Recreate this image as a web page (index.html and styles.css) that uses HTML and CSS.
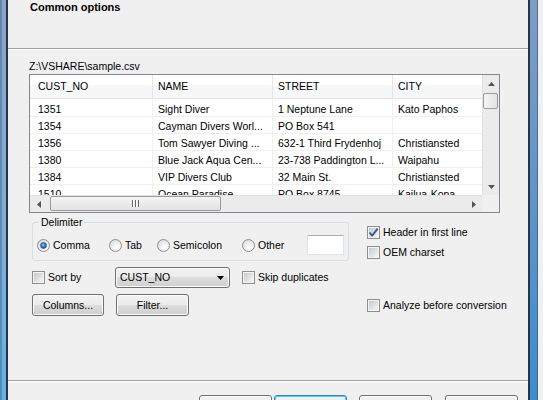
FILE: index.html
```html
<!DOCTYPE html>
<html>
<head>
<meta charset="utf-8">
<link rel="stylesheet" href="styles.css">
</head>
<body>
<div class="screen">
  <div class="frame frame-left"></div>
  <div class="dialog">
    <div class="header"><div class="title">Common options</div></div>
    <div class="sep"></div>
    <div class="body">
      <div class="path">Z:\VSHARE\sample.csv</div>
      <div class="listview">
        <div class="lv-main">
          <div class="lv-head">
            <div class="c c1">CUST_NO</div>
            <div class="c c2">NAME</div>
            <div class="c c3">STREET</div>
            <div class="c c4">CITY</div>
          </div>
          <div class="lv-rows">
            <div class="lv-row"><div class="c c1">1351</div><div class="c c2">Sight Diver</div><div class="c c3">1 Neptune Lane</div><div class="c c4">Kato Paphos</div></div>
            <div class="lv-row"><div class="c c1">1354</div><div class="c c2">Cayman Divers Worl...</div><div class="c c3">PO Box 541</div><div class="c c4"></div></div>
            <div class="lv-row"><div class="c c1">1356</div><div class="c c2">Tom Sawyer Diving ...</div><div class="c c3">632-1 Third Frydenhoj</div><div class="c c4">Christiansted</div></div>
            <div class="lv-row"><div class="c c1">1380</div><div class="c c2">Blue Jack Aqua Cen...</div><div class="c c3">23-738 Paddington L...</div><div class="c c4">Waipahu</div></div>
            <div class="lv-row"><div class="c c1">1384</div><div class="c c2">VIP Divers Club</div><div class="c c3">32 Main St.</div><div class="c c4">Christiansted</div></div>
            <div class="lv-row"><div class="c c1">1510</div><div class="c c2">Ocean Paradise</div><div class="c c3">PO Box 8745</div><div class="c c4">Kailua-Kona</div></div>
          </div>
        </div>
        <div class="vscroll">
          <div class="sbtn"><svg width="7" height="4" viewBox="0 0 7 4"><polygon points="3.5,0 7,4 0,4" fill="#555"/></svg></div>
          <div class="vthumb"></div>
          <div class="sfill"></div>
          <div class="sbtn"><svg width="7" height="4" viewBox="0 0 7 4"><polygon points="0,0 7,0 3.5,4" fill="#555"/></svg></div>
        </div>
        <div class="hscroll">
          <div class="sbtn"><svg width="4" height="7" viewBox="0 0 4 7"><polygon points="0,3.5 4,0 4,7" fill="#555"/></svg></div>
          <div class="hthumb"><svg width="7" height="7" viewBox="0 0 7 7"><rect x="0" y="0" width="1" height="7" fill="#666"/><rect x="1" y="0" width="1" height="7" fill="#fff"/><rect x="3" y="0" width="1" height="7" fill="#666"/><rect x="4" y="0" width="1" height="7" fill="#fff"/><rect x="6" y="0" width="1" height="7" fill="#666"/></svg></div>
          <div class="sfill"></div>
          <div class="sbtn"><svg width="4" height="7" viewBox="0 0 4 7"><polygon points="0,0 4,3.5 0,7" fill="#555"/></svg></div>
        </div>
        <div class="corner"></div>
      </div>
      <div class="options">
        <div class="opt-left">
          <fieldset class="group">
            <legend>Delimiter</legend>
            <div class="radios">
              <div class="radio w-comma"><span class="rb checked"><span class="dot"></span></span><span>Comma</span></div>
              <div class="radio w-tab"><span class="rb"></span><span>Tab</span></div>
              <div class="radio w-semi"><span class="rb"></span><span>Semicolon</span></div>
              <div class="radio w-other"><span class="rb"></span><span>Other</span></div>
              <div class="edit"></div>
            </div>
          </fieldset>
        </div>
        <div class="opt-right stack">
          <div class="check"><span class="cb"><svg width="11" height="11" viewBox="0 0 11 11"><path d="M1.5 5.5 L4.2 8.6 L9.6 1.6" fill="none" stroke="#3d5a8f" stroke-width="1.9" stroke-linejoin="round"/></svg></span><span>Header in first line</span></div>
          <div class="check"><span class="cb"></span><span>OEM charset</span></div>
        </div>
        <div class="opt-left sortrow">
          <div class="check w-sort"><span class="cb"></span><span>Sort by</span></div>
          <div class="combo"><span>CUST_NO</span><svg width="7" height="4" viewBox="0 0 7 4"><polygon points="0,0 7,0 3.5,4" fill="#000"/></svg></div>
          <div class="check skip"><span class="cb"></span><span>Skip duplicates</span></div>
        </div>
        <div class="opt-right"></div>
        <div class="opt-left btnrow">
          <div class="btn w-columns">Columns...</div>
          <div class="btn w-filter">Filter...</div>
        </div>
        <div class="opt-right analyze">
          <div class="check"><span class="cb"></span><span>Analyze before conversion</span></div>
        </div>
      </div>
    </div>
    <div class="sep"></div>
    <div class="footer">
      <div class="btn fbtn">&lt; Back</div>
      <div class="btn fbtn focus">Next &gt;</div>
      <div class="btn fbtn gap">Cancel</div>
      <div class="btn fbtn gap2">Help</div>
    </div>
  </div>
  <div class="frame frame-right"></div>
  <div class="outside"></div>
</div>
</body>
</html>
```
FILE: styles.css
```css
html, body {
  margin: 0;
  padding: 0;
}
body {
  font-family: "Liberation Sans", Arial, sans-serif;
  font-size: 10.5px;
  line-height: 13px;
  color: #000;
  background: #f0f0f0;
}
.screen {
  width: 543px;
  height: 400px;
  display: flex;
  overflow: hidden;
}
.frame {
  height: 400px;
  flex: none;
}
.frame-left {
  width: 8px;
  background:
    linear-gradient(to right, rgba(40, 70, 110, 0.35) 0 2px, transparent 2px 6px, #25364c 6px 8px),
    linear-gradient(to bottom, #8aa5c8 0%, #7fb0d8 60%, #66b2e3 100%);
}
.frame-right {
  width: 10px;
  background:
    linear-gradient(to right, #25364c 0 2px, transparent 2px 9px, rgba(40, 70, 110, 0.55) 9px 10px),
    linear-gradient(to bottom, #7f9dc2 0%, #5f93c6 55%, #3f8ccc 100%);
}
.outside {
  width: 5px;
  flex: none;
  background: #eef0f2;
}
.dialog {
  width: 520px;
  height: 400px;
  flex: none;
  display: flex;
  flex-direction: column;
  background: #f0f0f0;
}
.header {
  height: 48px;
  flex: none;
  padding: 1px 0 0 22px;
  box-sizing: border-box;
}
.title {
  font-size: 11px;
  font-weight: bold;
}
.sep {
  height: 2px;
  flex: none;
  box-sizing: border-box;
  border-top: 1px solid #a0a0a0;
  border-bottom: 1px solid #ffffff;
}
.body {
  height: 330px;
  flex: none;
  box-sizing: border-box;
  padding: 10px 0 0 21px;
}
.path {
  height: 13px;
}
.listview {
  margin-top: 1px;
  width: 471px;
  height: 139px;
  box-sizing: border-box;
  border: 1px solid #828790;
  background: #fff;
  display: grid;
  grid-template-columns: 452px 17px;
  grid-template-rows: 120px 17px;
}
.lv-main {
  overflow: hidden;
}
.lv-head {
  display: flex;
  height: 24px;
  box-sizing: border-box;
  border-bottom: 1px solid #e3e4e6;
  background: linear-gradient(#ffffff 0 42%, #f6f7f8 42% 100%);
  margin-bottom: 1px;
}
.lv-head .c {
  line-height: 23px;
  border-right: 1px solid #e3e4e6;
}
.lv-row {
  display: flex;
  height: 17px;
  box-sizing: border-box;
  border-bottom: 1px solid #f0f0f0;
}
.lv-row .c {
  line-height: 16px;
  padding-top: 1px;
  border-right: 1px solid #f0f0f0;
}
.c {
  flex: none;
  box-sizing: border-box;
  white-space: nowrap;
  overflow: hidden;
  padding-left: 5px;
}
.c1 { width: 123px; padding-left: 8px; }
.c2 { width: 120px; }
.c3 { width: 120px; }
.c4 { width: 89px; border-right: none !important; }

.vscroll {
  display: flex;
  flex-direction: column;
  background: #ebebeb;
  border-left: 1px solid #e2e2e2;
  box-sizing: border-box;
}
.hscroll {
  display: flex;
  background: #ebebeb;
  border-top: 1px solid #e2e2e2;
  box-sizing: border-box;
}
.sbtn {
  width: 16px;
  height: 16px;
  flex: none;
  display: flex;
  align-items: center;
  justify-content: center;
}
.vscroll .sbtn { width: 16px; height: 17px; }
.hscroll .sbtn { width: 17px; height: 16px; }
.sfill { flex: 1; }
.vthumb {
  flex: none;
  height: 16px;
  margin: 1px 1px 0 0;
  border: 1px solid #9b9b9b;
  border-radius: 2px;
  box-sizing: border-box;
  background: linear-gradient(to right, #f4f4f4, #e3e3e3);
}
.hthumb {
  flex: none;
  width: 171px;
  height: 15px;
  margin: 0 0 0 3px;
  border: 1px solid #9b9b9b;
  border-radius: 2px;
  box-sizing: border-box;
  background: linear-gradient(#f5f5f5, #e2e2e2);
  display: flex;
  align-items: center;
  justify-content: center;
}
.corner {
  background: #f0f0f0;
}

.options {
  display: grid;
  grid-template-columns: 338px 1fr;
  grid-template-rows: 54px 27px 22px;
}
.opt-left {
  padding-left: 3px;
}
.group {
  margin: 3px 0 0 0;
  padding: 6px 0 5px 0;
  width: 317px;
  box-sizing: border-box;
  border: 1px solid #d5dfe5;
  border-radius: 3px;
  min-width: 0;
}
.group legend {
  padding: 0 2px;
  margin-left: 6px;
  line-height: 13px;
}
.radios {
  display: flex;
  align-items: center;
  height: 20px;
  margin-left: 4px;
}
.radio {
  display: flex;
  align-items: center;
  gap: 3px;
  flex: none;
}
.w-comma { width: 72px; }
.w-tab { width: 48px; }
.w-semi { width: 85px; }
.w-other { width: 65px; }
.rb {
  width: 13px;
  height: 13px;
  flex: none;
  box-sizing: border-box;
  border-radius: 50%;
  border: 1px solid #8f8f8f;
  background: radial-gradient(circle at 60% 65%, #ffffff 0%, #f2f2f2 35%, #cfd2d6 100%);
  display: flex;
  align-items: center;
  justify-content: center;
}
.rb .dot {
  width: 7px;
  height: 7px;
  border-radius: 50%;
  box-sizing: border-box;
  border: 1px solid #2b5d93;
  background: radial-gradient(circle at 45% 40%, #9fd4f6 0%, #2a7cc4 45%, #0f3f7c 100%);
}
.edit {
  width: 37px;
  height: 20px;
  box-sizing: border-box;
  background: #fff;
  border: 1px solid #dfe3ea;
  border-top-color: #abadb3;
  margin-left: 0;
}
.stack {
  padding-top: 13px;
  display: flex;
  flex-direction: column;
  gap: 7px;
}
.check {
  display: flex;
  align-items: center;
  height: 13px;
  flex: none;
}
.cb {
  width: 13px;
  height: 13px;
  flex: none;
  box-sizing: border-box;
  border: 1px solid #8e8f8f;
  padding: 1px;
  margin-right: 3px;
  background: linear-gradient(135deg, #c4c8ce, #f6f6f6) content-box, #f4f4f4;
  display: flex;
  align-items: center;
  justify-content: center;
  overflow: visible;
}
.cb svg { flex: none; }
.sortrow {
  display: flex;
  align-items: flex-start;
}
.sortrow .check {
  margin-top: 4px;
}
.w-sort { width: 83px; }
.combo {
  width: 115px;
  height: 21px;
  box-sizing: border-box;
  border: 1px solid #707070;
  border-radius: 3px;
  box-shadow: inset 0 0 0 1px #fbfbfb;
  background: linear-gradient(#f2f2f2 0%, #ebebeb 50%, #dddddd 50%, #cfcfcf 100%);
  display: flex;
  align-items: center;
  justify-content: space-between;
  padding: 0 5px 0 4px;
  flex: none;
}
.skip {
  margin-left: 12px;
}
.btnrow {
  display: flex;
}
.btn {
  height: 22px;
  box-sizing: border-box;
  border: 1px solid #707070;
  border-radius: 3px;
  box-shadow: inset 0 0 0 1px #fbfbfb;
  background: linear-gradient(#f2f2f2 0%, #ebebeb 50%, #dddddd 50%, #cfcfcf 100%);
  display: flex;
  align-items: center;
  justify-content: center;
  flex: none;
}
.w-columns { width: 72px; }
.w-filter { width: 73px; margin-left: 12px; }
.analyze {
  display: flex;
  align-items: center;
}
.footer {
  flex: 1;
  overflow: hidden;
  display: flex;
  justify-content: flex-end;
  align-items: flex-start;
  padding: 13px 10px 0 0;
  box-sizing: border-box;
}
.fbtn {
  width: 73px;
  height: 23px;
}
.fbtn.focus {
  margin-left: 2px;
  border-color: #3c7fb1;
  box-shadow: inset 0 0 0 1px #48d2fa;
}
.fbtn.gap { margin-left: 12px; }
.fbtn.gap2 { margin-left: 13px; }
```
